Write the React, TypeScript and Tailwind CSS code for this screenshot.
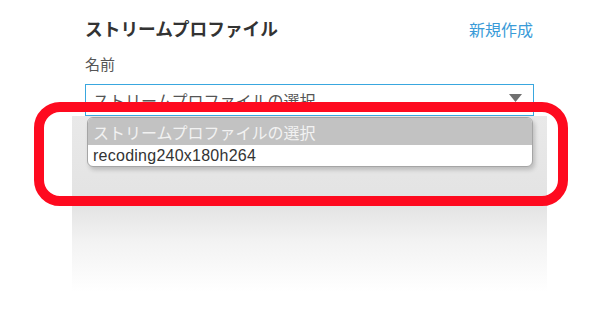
import React from "react";

const jp = { fontFamily: '"Noto Sans CJK JP", "Noto Sans", sans-serif' };

export default function App() {
    return (
        <div className="relative w-[593px] h-[324px] bg-white overflow-hidden" style={jp}>
            {/* soft shadow behind the open list */}
            <div className="absolute left-[72px] top-[116px] w-[475px] h-[176px] bg-[linear-gradient(to_bottom,#e9e9e9_0%,#e3e3e3_50%,#f3f3f3_72%,#ffffff_100%)]"/>

            <div className="relative ml-[85px] w-[449px] pt-[17px]">
                <div className="flex items-center justify-between h-[24px]">
                    <span className="text-[17.7px] font-bold text-[#333] leading-none">ストリームプロファイル</span>
                    <a href="#" className="text-[16px] text-[#3a9bd8] leading-none mr-[1px]">新規作成</a>
                </div>
                <div className="mt-[15px] text-[15px] text-[#555] leading-none h-[23px]">名前</div>
                <div className="mt-[5px] h-[32px] border border-[#39a7df] flex items-center justify-between pl-[7px] pr-[11px]">
                    <span className="text-[16px] text-[#555] leading-none">ストリームプロファイルの選択</span>
                    <svg width="13" height="8" viewBox="0 0 13 8" className="mb-[4px]">
                        <polygon points="0,0 13,0 6.5,8" fill="#707070"/>
                    </svg>
                </div>
                <div className="mt-[1px] ml-[2px] mr-[1px] rounded-[6px] border border-[#a5a5a5] overflow-hidden bg-white shadow-[2px_3px_4px_rgba(0,0,0,0.18)]">
                    <div className="h-[27px] bg-[#c2c2c2] flex items-center pl-[5px]">
                        <span className="text-[16px] text-[#f2f2f2] leading-none">ストリームプロファイルの選択</span>
                    </div>
                    <div className="h-[21px] flex items-center pl-[5px]">
                        <span className="text-[16px] text-[#333] leading-none tracking-[0.25px]"
                              style={{fontFamily: '"Liberation Sans", Arial, sans-serif'}}>recoding240x180h264</span>
                    </div>
                </div>
            </div>

            {/* red annotation frame */}
            <div className="absolute left-[34px] top-[102px] w-[534px] h-[104px] border-[10px] border-[#fe0a1f] rounded-[26px]"/>
        </div>
    );
}
